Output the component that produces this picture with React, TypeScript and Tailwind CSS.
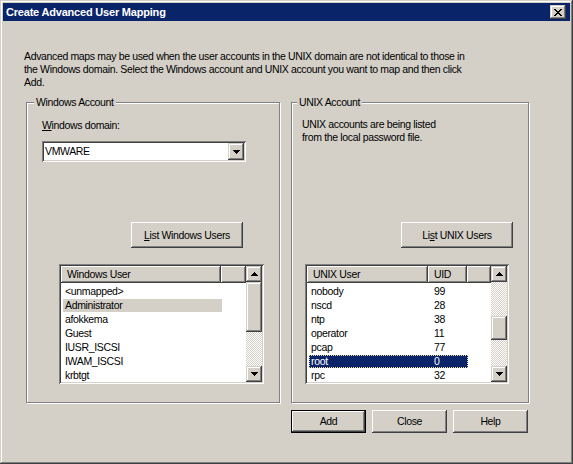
const raised = 'shadow-[inset_-1px_-1px_#404040,inset_1px_1px_#ffffff,inset_-2px_-2px_#808080]'
const raised2 = 'shadow-[inset_-1px_-1px_#404040,inset_1px_1px_#d4d0c8,inset_-2px_-2px_#808080,inset_2px_2px_#ffffff]'
const sunken = 'shadow-[inset_1px_1px_#808080,inset_-1px_-1px_#ffffff,inset_2px_2px_#404040,inset_-2px_-2px_#d4d0c8]'
const etched = 'border border-[#808080] shadow-[inset_1px_1px_#ffffff,1px_1px_#ffffff]'
const checker = 'bg-[image:repeating-conic-gradient(#ffffff_0_25%,#d4d0c8_0_50%)] bg-[length:2px_2px]'

function Arrow({ up }: { up?: boolean }) {
  return (
    <svg width="7" height="4" viewBox="0 0 7 4" shapeRendering="crispEdges">
      {up ? (
        <path d="M3 0h1v1h1v1h1v1h1v1H0V3h1V2h1V1h1z" fill="#000" />
      ) : (
        <path d="M0 0h7v1H6v1H5v1H4v1H3V3H2V2H1V1H0z" fill="#000" />
      )}
    </svg>
  )
}

const xRows = ['11000011', '01100110', '00111100', '00011000', '00111100', '01100110', '11000011']

function CloseGlyph() {
  return (
    <svg width="8" height="7" viewBox="0 0 8 7" shapeRendering="crispEdges">
      {xRows.map((row, y) =>
        row.split('').map((c, x) => (c === '1' ? <rect key={`${x}-${y}`} x={x} y={y} width="1" height="1" fill="#000" /> : null))
      )}
    </svg>
  )
}

function ScrollBar({ thumb }: { thumb: string }) {
  return (
    <div className="flex w-[16px] flex-col">
      <div className={`flex h-[16px] items-center justify-center bg-[#d4d0c8] ${raised2}`}>
        <Arrow up />
      </div>
      <div className={`flex flex-1 flex-col ${checker}`}>
        <div className={`w-[16px] bg-[#d4d0c8] ${raised2} ${thumb}`} />
      </div>
      <div className={`flex h-[16px] items-center justify-center bg-[#d4d0c8] ${raised2}`}>
        <Arrow />
      </div>
    </div>
  )
}

function HeaderCell({ label, width }: { label?: string; width: string }) {
  return (
    <div className={`h-[17px] bg-[#d4d0c8] pl-[6px] leading-[17px] ${raised} ${width}`}>{label}</div>
  )
}

const winUsers = ['<unmapped>', 'Administrator', 'afokkema', 'Guest', 'IUSR_ISCSI', 'IWAM_ISCSI', 'krbtgt']

const unixUsers = [
  ['nobody', '99'],
  ['nscd', '28'],
  ['ntp', '38'],
  ['operator', '11'],
  ['pcap', '77'],
  ['root', '0'],
  ['rpc', '32'],
]

function WindowsList() {
  return (
    <div className={`flex h-[120px] w-[205px] bg-white p-[2px] ${sunken}`}>
      <div className="flex flex-1 flex-col overflow-hidden">
        <div className="flex">
          <HeaderCell label="Windows User" width="w-[160px]" />
          <HeaderCell width="flex-1" />
        </div>
        <div className="flex flex-col pt-[2px]">
          {winUsers.map((u, i) => (
            <div key={u} className="h-[14px]">
              <div
                className={`ml-[2px] h-[13px] w-[159px] pl-[2px] leading-[13px] ${i === 1 ? 'bg-[#d4d0c8]' : ''}`}
              >
                {u}
              </div>
            </div>
          ))}
        </div>
      </div>
      <ScrollBar thumb="h-[50px]" />
    </div>
  )
}

function UnixList() {
  return (
    <div className={`flex h-[120px] w-[204px] bg-white p-[2px] ${sunken}`}>
      <div className="flex flex-1 flex-col overflow-hidden">
        <div className="flex">
          <HeaderCell label="UNIX User" width="w-[121px]" />
          <HeaderCell label="UID" width="w-[39px]" />
          <HeaderCell width="flex-1" />
        </div>
        <div className="flex flex-col pt-[2px]">
          {unixUsers.map(([name, uid]) => {
            const sel = name === 'root'
            return (
              <div key={name} className="h-[14px]">
                <div
                  className={`ml-[2px] flex h-[13px] w-[159px] leading-[11px] ${
                    sel ? 'border border-dotted border-[#f5db95] bg-[#0a246a] text-white' : 'border border-transparent'
                  }`}
                >
                  <span className="w-[118px] pl-[1px]">{name}</span>
                  <span className="pl-[6px]">{uid}</span>
                </div>
              </div>
            )
          })}
        </div>
      </div>
      <ScrollBar thumb="mt-[34px] h-[24px]" />
    </div>
  )
}

function Button({ children, width, height, isDefault }: { children: React.ReactNode; width: string; height: string; isDefault?: boolean }) {
  return (
    <div
      className={`flex items-center justify-center bg-[#d4d0c8] ${raised} ${width} ${height} ${
        isDefault ? 'border border-black' : ''
      }`}
    >
      {children}
    </div>
  )
}

export default function App() {
  return (
    <div
      className={`flex h-[464px] w-[573px] flex-col bg-[#d4d0c8] p-[3px] font-['Liberation_Sans',Arial,sans-serif] text-[10.5px] leading-[13px] tracking-[-0.35px] text-black ${raised2}`}
    >
      <div className="flex h-[18px] items-center justify-between bg-[#0a246a] pl-[3px] pr-[4px]">
        <span className="text-[11px] font-bold leading-[18px] tracking-[-0.2px] text-white">Create Advanced User Mapping</span>
        <div className={`flex h-[14px] w-[16px] items-center justify-center bg-[#d4d0c8] ${raised2}`}>
          <CloseGlyph />
        </div>
      </div>

      <p className="mt-[29px] pl-[21px] whitespace-nowrap">
        Advanced maps may be used when the user accounts in the UNIX domain are not identical to those in
        <br />
        the Windows domain. Select the Windows account and UNIX account you want to map and then click
        <br />
        Add.
      </p>

      <div className="mt-[13px] flex gap-[11px] pl-[23px]">
        <div className={`flex h-[301px] w-[254px] flex-col ${etched}`}>
          <span className="-mt-[7px] ml-[7px] self-start bg-[#d4d0c8] px-[2px]">Windows Account</span>
          <span className="ml-[15px] mt-[10px]">
            <span className="underline">W</span>indows domain:
          </span>
          <div className={`ml-[15px] mt-[9px] flex h-[21px] w-[204px] bg-white p-[2px] ${sunken}`}>
            <span className="flex-1 pl-[1px] leading-[17px]">VMWARE</span>
            <div className={`flex h-[17px] w-[16px] items-center justify-center bg-[#d4d0c8] ${raised2}`}>
              <Arrow />
            </div>
          </div>
          <div className="ml-[104px] mt-[60px]">
            <Button width="w-[112px]" height="h-[26px]">
              <span>
                <span className="underline">L</span>ist Windows Users
              </span>
            </Button>
          </div>
          <div className="ml-[32px] mt-[16px]">
            <WindowsList />
          </div>
        </div>

        <div className={`flex h-[301px] w-[238px] flex-col ${etched}`}>
          <span className="-mt-[7px] ml-[5px] self-start bg-[#d4d0c8] px-[2px]">UNIX Account</span>
          <p className="ml-[10px] mt-[9px]">
            UNIX accounts are being listed
            <br />
            from the local password file.
          </p>
          <div className="ml-[109px] mt-[78px]">
            <Button width="w-[112px]" height="h-[26px]">
              <span>
                Li<span className="underline">s</span>t UNIX Users
              </span>
            </Button>
          </div>
          <div className="ml-[13px] mt-[16px]">
            <UnixList />
          </div>
        </div>
      </div>

      <div className="mt-[7px] flex justify-end gap-[6px] pr-[42px]">
        <Button width="w-[75px]" height="h-[23px]" isDefault>
          Add
        </Button>
        <Button width="w-[75px]" height="h-[23px]">
          Close
        </Button>
        <Button width="w-[75px]" height="h-[23px]">
          Help
        </Button>
      </div>
    </div>
  )
}
